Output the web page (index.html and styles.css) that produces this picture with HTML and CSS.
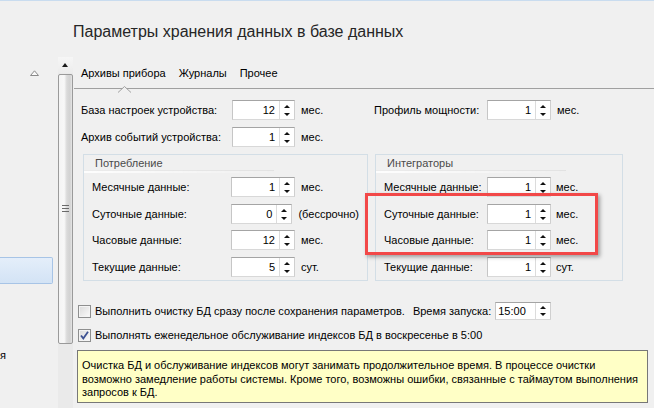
FILE: index.html
```html
<!DOCTYPE html>
<html lang="ru">
<head>
  <meta charset="UTF-8">
  <title>Параметры хранения данных</title>
  <link rel="stylesheet" href="styles.css">
</head>
<body>
  <div id="window">
    <div class="nav">
      <svg class="nav-up" width="9" height="6" viewBox="0 0 9 6"><polygon points="0.5,5.5 4.5,0.8 8.5,5.5" fill="#fafafa" stroke="#8a8a8a"/></svg>
      <div class="nav-item"></div>
      <div class="nav-text">я</div>
    </div>

    <div class="scrollbar">
      <div class="sb-btn"><span class="sb-arrow"></span></div>
      <div class="sb-thumb"><span class="grip"></span></div>
    </div>

    <div class="main">
      <h1 class="title">Параметры хранения данных в базе данных</h1>

      <div class="tabs">
        <span class="tab active">Архивы прибора
          <svg class="notch" width="13" height="7" viewBox="0 0 13 7"><polyline points="0,6.5 6.5,0.5 13,6.5" fill="#f0f0f0" stroke="#a0a0a0"/></svg>
        </span>
        <span class="tab">Журналы</span>
        <span class="tab">Прочее</span>
      </div>

      <div class="page">
        <div class="top-grid">
          <div class="row">
            <span class="label l-main">База настроек устройства:</span>
            <span class="spin"><span class="val">12</span><span class="btns"></span></span>
            <span class="unit">мес.</span>
          </div>
          <div class="row">
            <span class="label l-side">Профиль мощности:</span>
            <span class="spin w64"><span class="val">1</span><span class="btns"></span></span>
            <span class="unit">мес.</span>
          </div>
          <div class="row">
            <span class="label l-main">Архив событий устройства:</span>
            <span class="spin"><span class="val">1</span><span class="btns"></span></span>
            <span class="unit">мес.</span>
          </div>
        </div>

        <div class="groups">
          <div class="group g1">
            <div class="legend">Потребление</div>
            <div class="group-rows">
              <div class="row"><span class="label l-g1">Месячные данные:</span><span class="spin w64"><span class="val">1</span><span class="btns"></span></span><span class="unit">мес.</span></div>
              <div class="row"><span class="label l-g1">Суточные данные:</span><span class="spin w64"><span class="val">0</span><span class="btns"></span></span><span class="unit">(бессрочно)</span></div>
              <div class="row"><span class="label l-g1">Часовые данные:</span><span class="spin w64"><span class="val">12</span><span class="btns"></span></span><span class="unit">мес.</span></div>
              <div class="row"><span class="label l-g1">Текущие данные:</span><span class="spin w64"><span class="val">5</span><span class="btns"></span></span><span class="unit">сут.</span></div>
            </div>
          </div>
          <div class="group g2">
            <div class="legend">Интеграторы</div>
            <div class="group-rows">
              <div class="row"><span class="label l-g2">Месячные данные:</span><span class="spin w64"><span class="val">1</span><span class="btns"></span></span><span class="unit">мес.</span></div>
              <div class="row"><span class="label l-g2">Суточные данные:</span><span class="spin w64"><span class="val">1</span><span class="btns"></span></span><span class="unit">мес.</span></div>
              <div class="row"><span class="label l-g2">Часовые данные:</span><span class="spin w64"><span class="val">1</span><span class="btns"></span></span><span class="unit">мес.</span></div>
              <div class="row"><span class="label l-g2">Текущие данные:</span><span class="spin w64"><span class="val">1</span><span class="btns"></span></span><span class="unit">сут.</span></div>
            </div>
          </div>
        </div>

        <div class="cb-row first">
          <span class="cb"></span>
          <span class="cb-text">Выполнить очистку БД сразу после сохранения параметров.</span>
          <span class="time-label">Время запуска:</span>
          <span class="spin time"><span class="val">15:00</span><span class="btns"></span></span>
        </div>
        <div class="cb-row">
          <span class="cb"><svg width="11" height="11" viewBox="0 0 11 11"><path d="M2 5.5 L4.3 8.4 L9 1.8" fill="none" stroke="#3d5192" stroke-width="1.8"/></svg></span>
          <span class="cb-text">Выполнять еженедельное обслуживание индексов БД в воскресенье в 5:00</span>
        </div>

        <div class="note">
          Очистка БД и обслуживание индексов могут занимать продолжительное время. В процессе очистки<br>
          возможно замедление работы системы. Кроме того, возможны ошибки, связанные с таймаутом выполнения<br>
          запросов к БД.
        </div>
      </div>
    </div>
  </div>

  <div class="highlight"></div>
</body>
</html>
```

FILE: styles.css
```css
*{
  margin: 0;
  padding: 0;
  box-sizing: border-box;
}
body{
  width: 654px;
  height: 408px;
  overflow: hidden;
  position: relative;
  background: #f0f0f0;
  border-top: 1px solid #c9dcef;
  font-family: "Liberation Sans", Arial, sans-serif;
  font-size: 11px;
  color: #000;
}
#window{
  display: flex;
  height: 407px;
}

/* left navigation */
.nav{
  width: 58px;
  flex: none;
}
.nav-up{
  display: block;
  margin: 69px 0 0 30px;
}
.nav-item{
  width: 53px;
  height: 27px;
  margin-top: 181px;
  background: linear-gradient(#e4eefa, #d3e3f5);
  border: 1px solid #a7c4e6;
  border-left: none;
  border-radius: 0 2px 2px 0;
}
.nav-text{
  margin-top: 64px;
  line-height: 14px;
}

/* scrollbar */
.scrollbar{
  width: 15px;
  flex: none;
  margin-top: 56px;
  background: #eaeaea;
}
.sb-btn{
  height: 16px;
  position: relative;
  background: linear-gradient(#f6f6f6, #ececec);
}
.sb-arrow{
  position: absolute;
  left: 4px;
  top: 6px;
  border-left: 3.5px solid transparent;
  border-right: 3.5px solid transparent;
  border-bottom: 4px solid #1a1a1a;
}
.sb-thumb{
  height: 270px;
  margin-top: 1px;
  border: 1px solid #9a9a9a;
  border-radius: 2px;
  background: linear-gradient(to right, #f4f4f4 0%, #f8f8f8 40%, #dadada 60%, #d2d2d2 85%, #e6e6e6 100%);
  position: relative;
}
.grip{
  position: absolute;
  left: 3px;
  top: 130px;
  width: 7px;
  height: 7px;
  border-top: 1px solid #6a6a6a;
  border-bottom: 1px solid #6a6a6a;
}
.grip::after{
  content: "";
  position: absolute;
  left: 0;
  top: 2px;
  width: 7px;
  height: 1px;
  background: #6a6a6a;
}

/* main */
.main{
  flex: 1;
}
.title{
  margin-top: 21px;
  font-size: 16px;
  font-weight: normal;
  line-height: 20px;
  color: #262626;
}
.tabs{
  margin: 20px 0 0 1px;
  height: 27px;
  border-bottom: 1px solid #a0a0a0;
  padding-left: 7px;
  display: flex;
  gap: 13px;
}
.tab{
  line-height: 22px;
  position: relative;
}
.notch{
  position: absolute;
  left: 37px;
  bottom: -5px;
}

.page{
  padding-top: 11px;
}
.row{
  display: flex;
  align-items: center;
  height: 20px;
}
.label{
  flex: none;
}
.l-main{ width: 151px; }
.l-side{ width: 113px; }
.l-g1{ width: 139px; }
.l-g2{ width: 103px; }
.unit{
  margin-left: 6px;
}
.g2 .unit{
  margin-left: 5px;
}

.top-grid{
  display: grid;
  grid-template-columns: 293px auto;
  row-gap: 7px;
  padding-left: 8px;
}

/* spin box */
.spin{
  display: flex;
  width: 63px;
  height: 20px;
  background: #fff;
  border: 1px solid;
  border-color: #a4a4a4 #cfcfcf #d8d8d8 #c6c6c6;
}
.spin.w64{
  width: 64px;
}
.val{
  flex: 1;
  text-align: right;
  padding-right: 4px;
  line-height: 18px;
}
.btns{
  width: 15px;
  flex: none;
  border-left: 1px solid #dcdcdc;
  position: relative;
}
.btns::before,
.btns::after{
  content: "";
  position: absolute;
  left: 4px;
  border-left: 3px solid transparent;
  border-right: 3px solid transparent;
}
.btns::before{
  top: 4px;
  border-bottom: 3px solid #111;
}
.btns::after{
  bottom: 3px;
  border-top: 3px solid #111;
}

/* group boxes */
.groups{
  display: flex;
  gap: 7px;
  margin: 7px 0 0 10px;
}
.group{
  border: 1px solid #d3dee6;
}
.g1{ width: 285px; }
.g2{ width: 248px; }
.legend{
  height: 18px;
  line-height: 16px;
  padding-left: 11px;
  color: #4a4a4a;
  position: relative;
}
.legend::after{
  content: "";
  position: absolute;
  left: 0;
  bottom: 0;
  width: 190px;
  height: 2px;
  background: linear-gradient(to right, rgba(255,255,255,0.9), rgba(255,255,255,0));
  border-top: 1px solid rgba(200,200,200,0.35);
}
.group-rows{
  display: flex;
  flex-direction: column;
  gap: 6.5px;
  padding: 4px 8px 3.5px;
}

/* checkboxes */
.cb-row{
  display: flex;
  align-items: center;
  height: 18px;
  margin: 6px 0 0 5px;
}
.cb-row.first{
  margin-top: 21px;
}
.cb{
  width: 13px;
  height: 13px;
  flex: none;
  border: 1px solid #8e8f8f;
  background: linear-gradient(135deg, #dadada, #fbfbfb);
  box-shadow: inset 0 0 0 1px #f4f4f4;
  display: flex;
  align-items: center;
  justify-content: center;
}
.cb-text{
  margin-left: 4px;
}
.time-label{
  margin-left: 8px;
}
.spin.time{
  width: 56px;
  height: 18px;
  margin-left: 4px;
}
.spin.time .val{
  text-align: left;
  padding: 0 0 0 2px;
  line-height: 16px;
}
.spin.time .btns::before{ top: 3px; }
.spin.time .btns::after{ bottom: 3px; }

.note{
  width: 571px;
  margin: 6px 0 0 4px;
  border: 1px solid #777;
  background: #ffffc6;
  padding: 8px 4px 2px;
  line-height: 13.5px;
}

.highlight{
  position: absolute;
  left: 365px;
  top: 192px;
  width: 233px;
  height: 62px;
  border: 3px solid #f24848;
  box-shadow: 2px 2px 4px rgba(0,0,0,0.35);
}
```
